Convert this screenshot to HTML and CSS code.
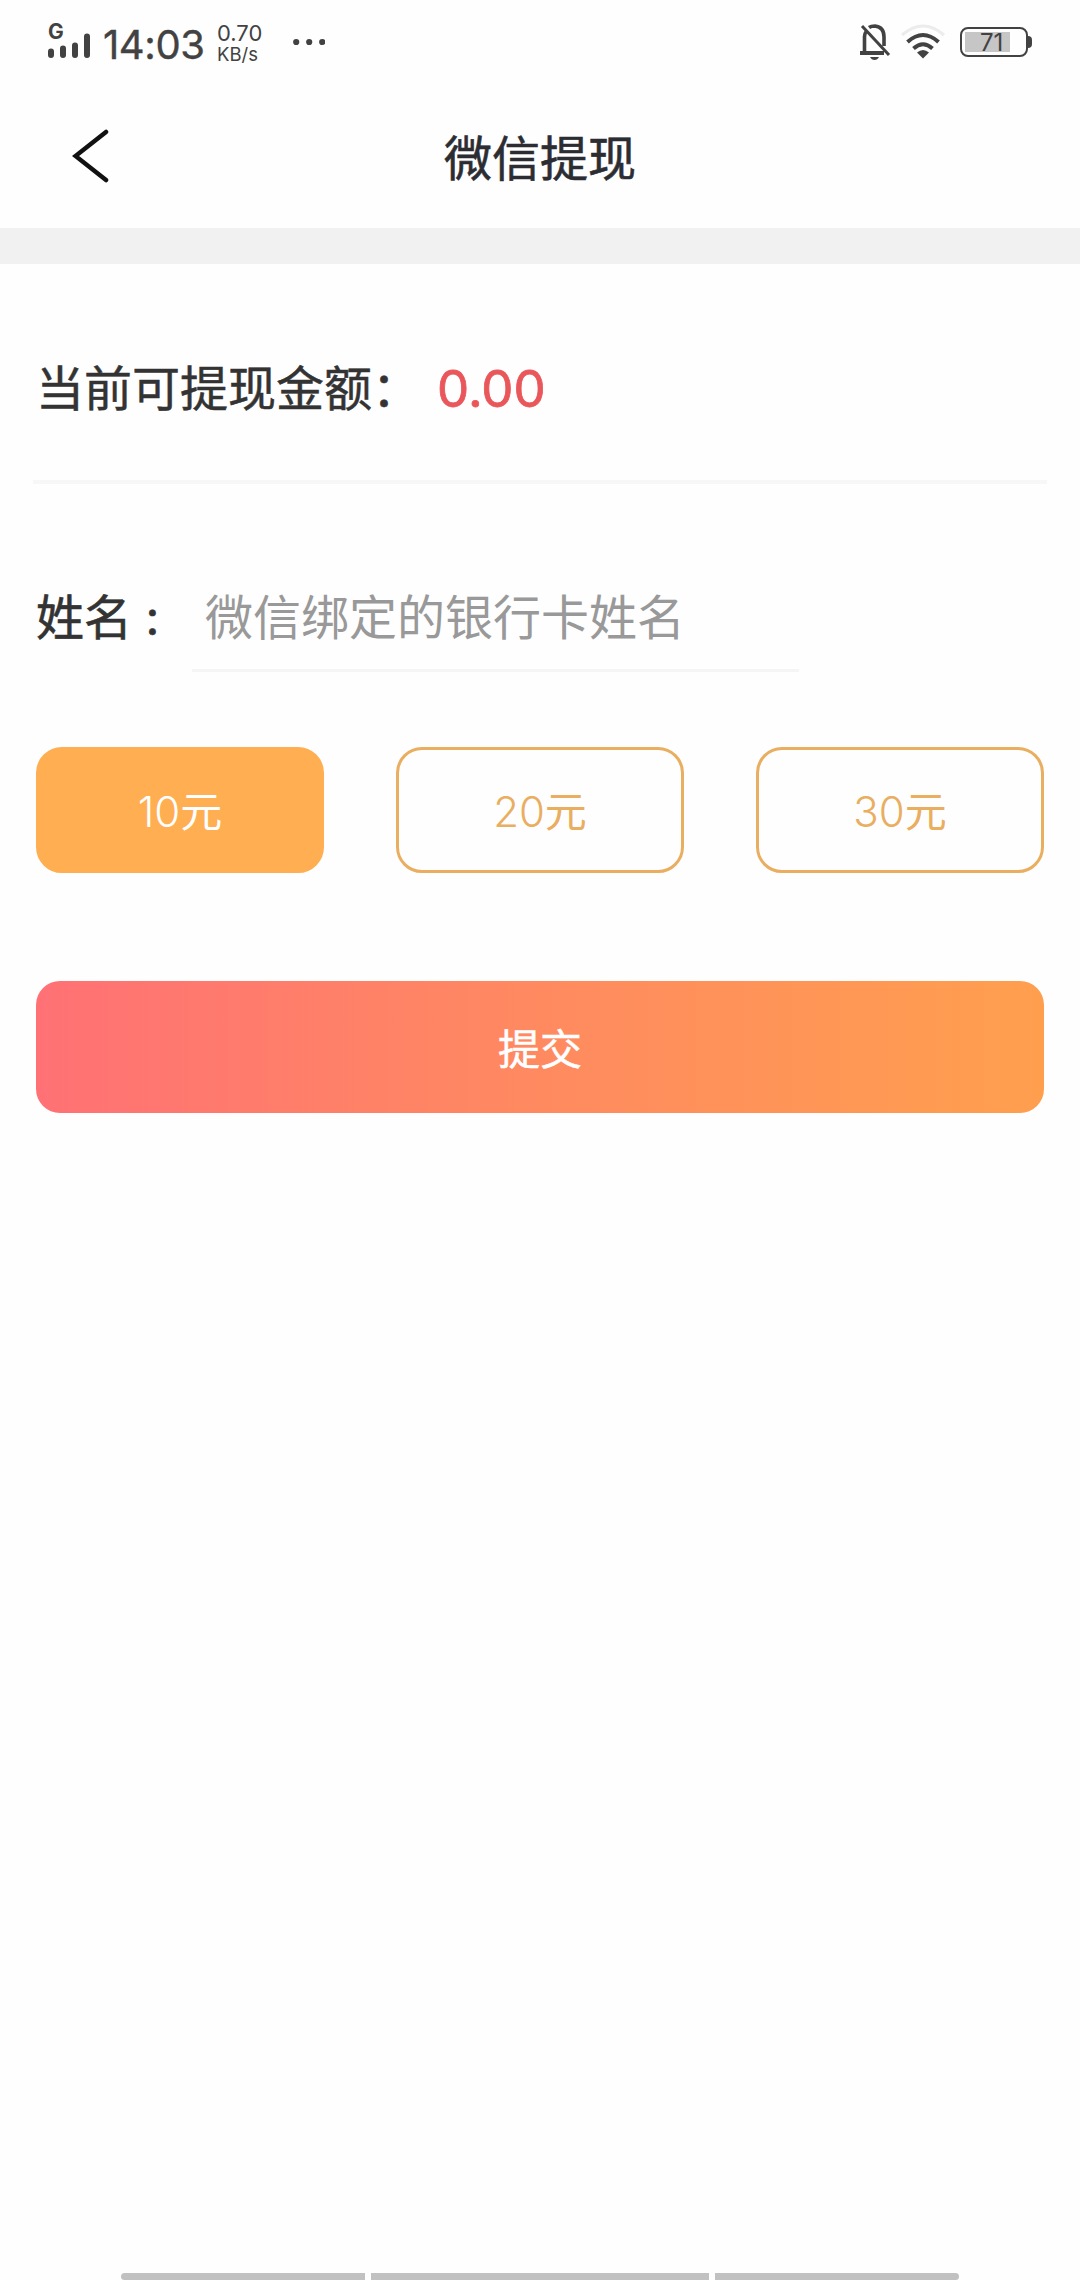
FILE: index.html
```html
<!DOCTYPE html>
<html lang="zh-CN">
<head>
<meta charset="utf-8">
<title>微信提现</title>
<link rel="stylesheet" href="styles.css">
</head>
<body>
<div class="screen">
  <div class="status">
    <div class="cell">
      <span class="net">G</span>
      <svg class="bars" width="42" height="25" viewBox="0 0 42 25"><g stroke="#424242" stroke-width="6" stroke-linecap="round"><path d="M3 18.500V22M15 15.500V22M27 12.500V22M39 3.500V22"/></g></svg>
    </div>
    <span class="time">14:03</span>
    <div class="speed"><span class="rate">0.70</span><span class="unit">KB/s</span></div>
    <svg class="dots" width="32" height="8" viewBox="0 0 32 8"><g fill="#424242"><circle cx="3.200" cy="4" r="3.100"/><circle cx="16.200" cy="4" r="3.100"/><circle cx="29.200" cy="4" r="3.100"/></g></svg>
    <svg class="bell" width="32" height="38" viewBox="0 0 32 38"><g fill="none" stroke="#424242" stroke-width="3.600"><path d="M5.500 29V13.500Q5.500 10.500 7.500 8M10 4.500Q12 3 16 3Q25 4 25 14V23"/><path d="M1 30H25" stroke-width="4"/><path d="M3 3L30 32" stroke-width="3"/></g><path d="M11 34H20Q18.500 37 15.500 37Q12.500 37 11 34Z" fill="#424242"/></svg>
    <svg class="wifi" width="46" height="36" viewBox="0 0 46 36"><g fill="none" stroke="#424242" stroke-width="4"><path d="M2 11Q23 -7 44 11" stroke="#ececec" stroke-width="3"/><path d="M7.500 18Q23 4 38.500 18"/><path d="M13.500 24.500Q23 16 32.500 24.500"/></g><path d="M17 28.500Q23 23.500 29 28.500L23 34.500Z" fill="#424242"/></svg>
    <div class="battery"><span class="level">71</span></div>
    <span class="nub"></span>
  </div>
  <header class="bar">
    <svg class="back" width="38" height="54" viewBox="0 0 38 54"><path d="M34 3L3.500 27L34 51" fill="none" stroke="#111" stroke-width="4.500" stroke-linecap="round"/></svg>
    <h1 class="title">微信提现</h1>
  </header>
  <div class="band"></div>
  <main class="content">
    <div class="balance"><span>当前可提现金额：</span><span class="amount">0.00</span></div>
    <div class="name-row"><label class="name-label" for="name">姓名 :</label><input class="name-input" id="name" placeholder="微信绑定的银行卡姓名"></div>
    <div class="options">
      <button class="option selected">10<span class="yuan">元</span></button>
      <button class="option">20<span class="yuan">元</span></button>
      <button class="option">30<span class="yuan">元</span></button>
    </div>
    <button class="submit">提交</button>
  </main>
  <div class="nav"><span class="side left"></span><span class="mid"></span><span class="side right"></span></div>
</div>
</body>
</html>
```
FILE: styles.css
```css
* { box-sizing: border-box; }
body { margin: 0; background: #fefefe; }
.screen {
  width: 1080px;
  height: 2280px;
  display: flex;
  flex-direction: column;
  overflow: hidden;
  color: #333;
  font-family: Inter, "Noto Sans CJK SC", sans-serif;
}
button, input { font-family: inherit; }
svg { display: block; flex: none; }

.status { height: 88px; display: flex; align-items: flex-start; padding-left: 48px; color: #424242; }
.cell { width: 42px; padding-top: 21px; }
.net { display: block; height: 12px; font-size: 21px; line-height: 22px; font-weight: 700; }
.time { width: 113px; margin-left: 13px; padding-top: 20px; font-size: 40px; line-height: 49px; letter-spacing: -0.4px; -webkit-text-stroke: 0.4px; }
.speed { width: 70px; margin-left: 1px; padding-top: 23px; display: flex; flex-direction: column; }
.rate { font-size: 22px; line-height: 20px; }
.unit { font-size: 18.500px; line-height: 22px; }
.dots { margin: 38px 0 0 6px; }
.bell { margin: 23px 0 0 534px; }
.wifi { margin: 24px 0 0 9px; }
.battery {
  width: 68px;
  height: 30px;
  margin: 27px 0 0 14px;
  padding: 3px;
  border: 2.500px solid #424242;
  border-radius: 8px;
}
.level { display: block; width: 45px; height: 20px; padding-left: 15px; background: #c6c6c6; font-size: 24px; line-height: 21px; }
.nub { width: 4px; height: 12px; margin-top: 36px; border-radius: 0 4px 4px 0; background: #424242; }

.bar { height: 140px; display: grid; grid-template-columns: 180px 1fr 180px; }
.back { margin: 41px 0 0 72px; }
.title { margin: 36px 0 0; text-align: center; font-size: 48px; line-height: 70px; font-weight: 400; -webkit-text-stroke: 0.6px; color: #2b2d33; }
.band { height: 36px; background: #f1f1f1; }

.content { padding: 0 36px; }
.balance {
  height: 220px;
  margin: 0 -3px;
  padding: 90px 3px 0;
  border-bottom: 4px solid #f7f7f7;
  display: flex;
  font-size: 48px;
  line-height: 70px;
  -webkit-text-stroke: 0.5px;
}
.amount { margin-left: 17px; font-size: 51px; color: #e9575b; -webkit-text-stroke: 0.8px; }
.name-row { height: 188px; padding-top: 85px; display: flex; }
.name-label { width: 156px; padding-top: 14px; white-space: pre; font-size: 48px; line-height: 70px; -webkit-text-stroke: 0.6px; }
.name-input {
  width: 607px;
  height: 103px;
  padding: 0 13px 3px;
  border: 0;
  border-bottom: 3px solid #f5f5f5;
  background: transparent;
  font-size: 48px;
  font-weight: 400;
}
.name-input::placeholder { color: #999; opacity: 1; }
.options { display: grid; grid-template-columns: repeat(3, 288px); gap: 72px; margin-top: 75px; }
.option {
  height: 126px;
  padding: 0 0 3px;
  border: 3px solid #e9ae60;
  border-radius: 26px;
  background: transparent;
  color: #e9ae60;
  font-size: 42px;
  font-weight: 300;
}
.yuan { font-weight: 400; }
.selected { border-color: #ffae51; background: #ffae51; color: #fff; }
.submit {
  display: block;
  width: 100%;
  height: 132px;
  margin-top: 108px;
  padding: 0 0 1px;
  border: 0;
  border-radius: 24px;
  background: linear-gradient(90deg, #ff7175, #ff8a60 50%, #ff9f4e);
  color: #fff;
  font-size: 42px;
  font-weight: 400;
  -webkit-text-stroke: 0.5px;
}
.nav { height: 7px; margin-top: auto; display: flex; justify-content: center; gap: 6px; }
.nav span { background: #c1c1c1; }
.side { width: 244px; }
.mid { width: 338px; }
.left { border-radius: 4px 0 0 4px; }
.right { border-radius: 0 4px 4px 0; }
```
